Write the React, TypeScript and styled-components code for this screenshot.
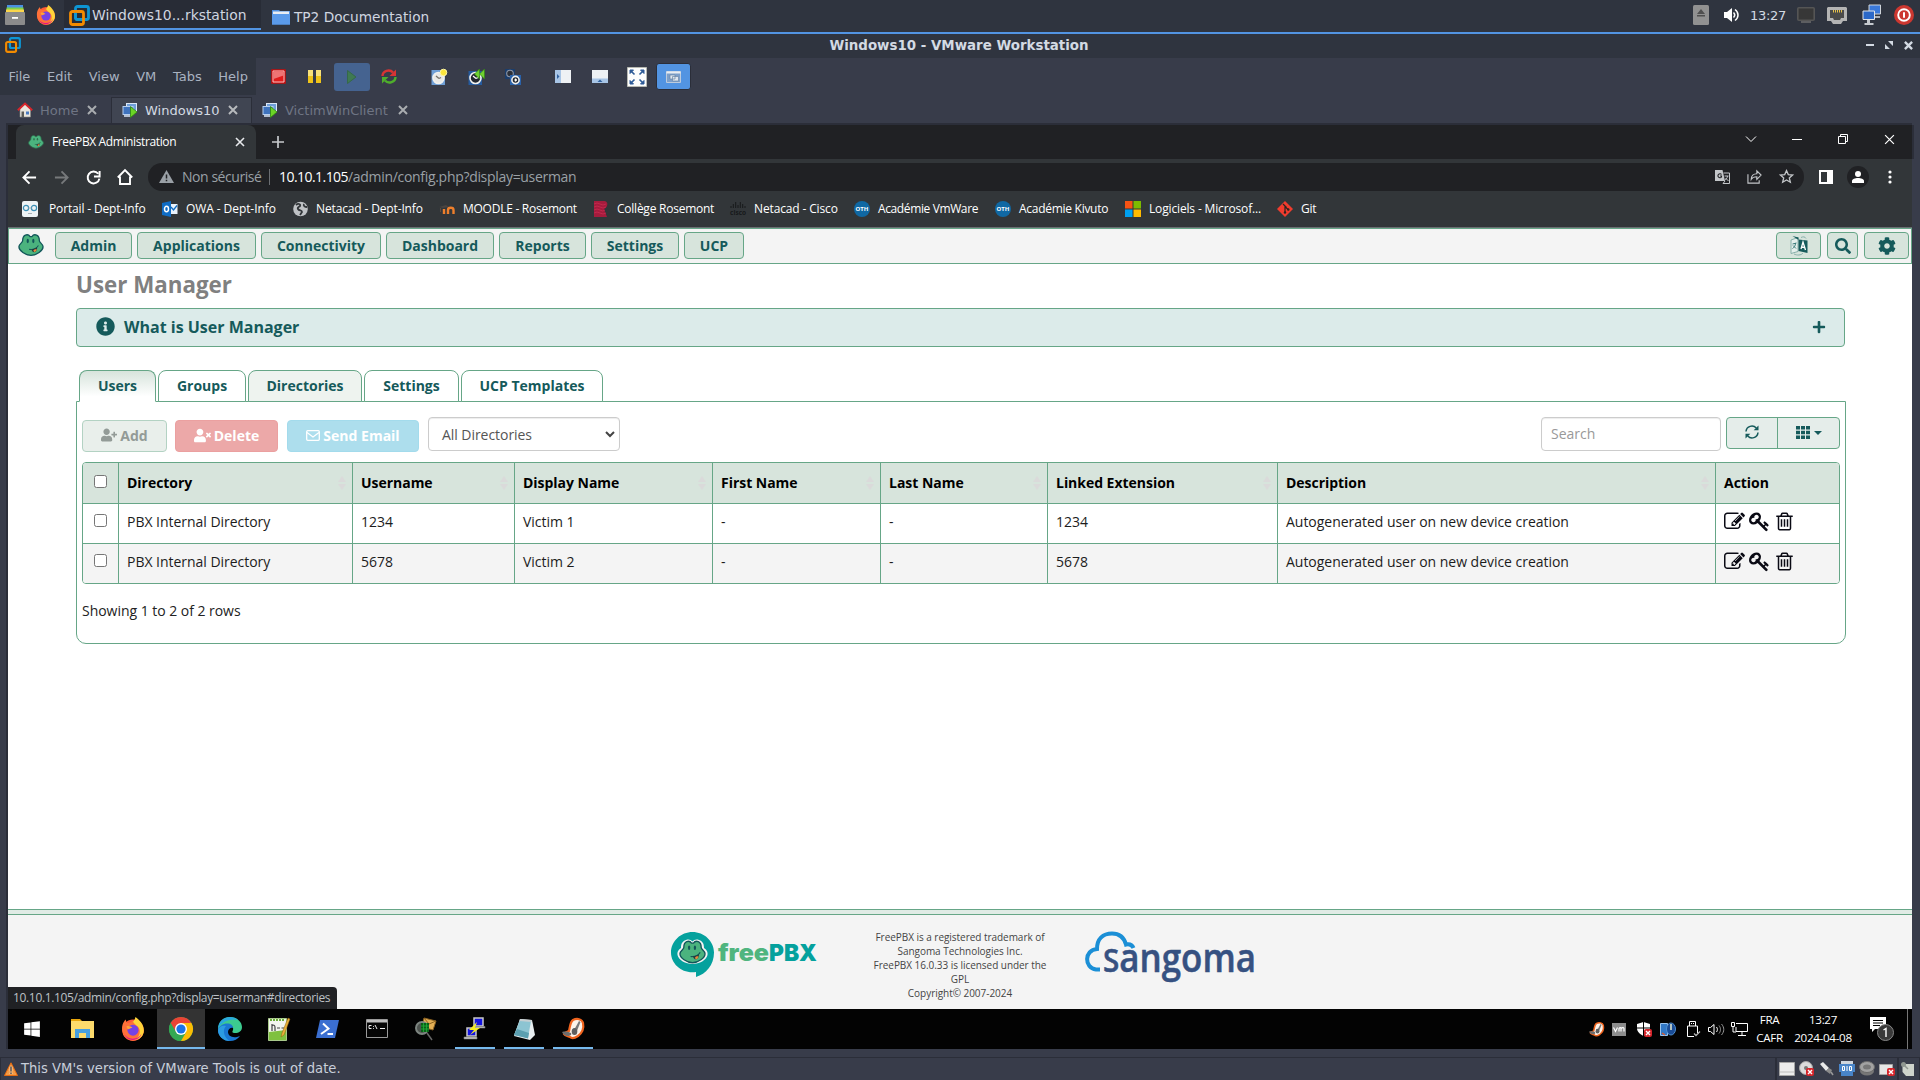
import React from 'react';
import styled, { createGlobalStyle, css } from 'styled-components';
import { FaInfoCircle, FaPlus, FaUserPlus, FaUserTimes, FaCog, FaSearch, FaWindows } from 'react-icons/fa';

const green = '#66a687';
const teal = '#155a5b';
const web = '"Open Sans", "Noto Sans", sans-serif';
const desk = '"DejaVu Sans", sans-serif';

const Global = createGlobalStyle`
  * { box-sizing: border-box; }
  html, body { margin: 0; padding: 0; background: #383c4a; }
  svg { display: block; flex: none; overflow: visible; }
`;

const Desktop = styled.div`
  width: 1920px;
  height: 1080px;
  display: flex;
  flex-direction: column;
  overflow: hidden;
  background: #383c4a;
  color: #d3dae3;
  font-family: ${desk};
  font-size: 13px;
  white-space: nowrap;
`;

/* A box that centres one drawing, with the gap that precedes it */
const Slot = styled.span<{ $w: number; $ml?: number }>`
  flex: none;
  display: flex;
  align-items: center;
  justify-content: center;
  width: ${p => p.$w}px;
  margin-left: ${p => p.$ml ?? 0}px;
`;
const Fill = styled.div`
  flex: 1;
`;

/* ---------- Desktop panel ---------- */
const Panel = styled.header`
  height: 34px;
  flex: none;
  display: flex;
  align-items: center;
  padding: 0 6px 2px 5px;
  background: #2f343f;
  border-bottom: 2px solid #5294e2;
`;
const TaskButton = styled.div<{ $active?: boolean }>`
  height: 30px;
  align-self: flex-start;
  display: flex;
  align-items: center;
  font-size: 13.7px;
  color: #d0d6e0;
  ${p =>
    p.$active
      ? css`
          width: 197px;
          margin-left: 8px;
          padding-left: 5px;
          gap: 2px;
          background: #282c36;
          border-bottom: 2px solid #5294e2;
          padding-top: 2px;
          font-size: 13.9px;
        `
      : css`
          margin-left: 11px;
          gap: 4px;
          padding-top: 3px;
        `}
`;
const PanelClock = styled.span`
  width: 38px;
  margin-left: 11px;
  margin-right: 1px;
  letter-spacing: -0.3px;
`;

const TitleBar = styled.div`
  height: 24px;
  flex: none;
  display: grid;
  grid-template-columns: 100px 1fr 100px;
  align-items: center;
  background: #2f343f;
  padding: 0 7px 2px 5px;
`;
const Title = styled.h1`
  margin: 0;
  text-align: center;
  font: bold 13.4px ${desk};
  color: #d3dae3;
`;
const WindowButtons = styled.div`
  display: flex;
  justify-content: flex-end;
  gap: 11px;
`;

const MenuRow = styled.div`
  height: 37px;
  flex: none;
  display: flex;
  align-items: center;
`;
const MenuBar = styled.nav`
  width: 256px;
  height: 37px;
  display: flex;
  align-items: center;
  gap: 16.6px;
  padding-left: 8.6px;
  background: #2f343f;
  color: #a9b2c1;
`;
const ToolButton = styled.span<{ $tone: 'dim' | 'on' }>`
  display: flex;
  align-items: center;
  justify-content: center;
  border-radius: 3px;
  ${p =>
    p.$tone === 'dim'
      ? css`
          width: 36px;
          height: 28px;
          margin-left: 12px;
          background: #456390;
        `
      : css`
          width: 35px;
          height: 27px;
          margin-left: 9px;
          background: #5294e2;
          border: 1px solid #2b2e39;
        `}
`;

const VmTabs = styled.div`
  height: 29px;
  flex: none;
  display: flex;
  align-items: flex-end;
  padding-left: 6px;
`;
const VmTab = styled.div<{ $active?: boolean; $w: number; $pl: number }>`
  width: ${p => p.$w}px;
  height: 27px;
  padding: 0 13px 1px ${p => p.$pl}px;
  display: flex;
  align-items: center;
  color: ${p => (p.$active ? '#d3dae3' : '#6f7584')};
  background: ${p => (p.$active ? '#404552' : 'transparent')};
  border: 1px solid ${p => (p.$active ? '#2b2e39' : 'transparent')};
  gap: 7px;
`;
const VmTabName = styled.span`
  flex: 1;
`;

/* ---------- Guest screen ---------- */
const Guest = styled.div`
  width: 1906px;
  height: 926px;
  flex: none;
  margin-left: 6px;
  margin-top: -1px;
  border-left: 2px solid #2b2e39;
  border-top: 2px solid #2b2e39;
  display: flex;
  flex-direction: column;
  font-family: ${web};
`;
const TabStrip = styled.div`
  height: 34px;
  flex: none;
  display: flex;
  align-items: center;
  padding-right: 17px;
  background: #202124;
  box-shadow: 2px 0 0 #2b2e39;
`;
const ChromeTab = styled.div`
  width: 240px;
  height: 34px;
  margin-left: 8px;
  padding: 0 11px 1px 12px;
  display: flex;
  align-items: center;
  gap: 8px;
  background: #323639;
  border-radius: 8px 8px 0 0;
  color: #fff;
  font-size: 12px;
  letter-spacing: -0.38px;
`;
const TabTitle = styled.span`
  flex: 1;
`;
const CaptionButtons = styled.div`
  display: flex;
  align-items: center;
  gap: 34px;
  padding-bottom: 6px;
`;
const Toolbar = styled.div`
  height: 36px;
  flex: none;
  display: flex;
  align-items: center;
  padding: 0 14px 0 13px;
  background: #323639;
`;
const Omnibox = styled.div`
  width: 1656px;
  height: 28px;
  margin-left: 15px;
  margin-right: 15px;
  padding: 0 10px 1px;
  display: flex;
  align-items: center;
  border-radius: 14px;
  background: #202124;
  color: #9aa0a6;
  font-size: 14px;
  letter-spacing: -0.31px;
`;
const Insecure = styled.span`
  width: 88px;
  margin-left: 8px;
  border-right: 1px solid #6b6e72;
  line-height: 16px;
  letter-spacing: -0.45px;
`;
const Host = styled.span`
  margin-left: 9px;
  color: #fff;
  letter-spacing: -0.55px;
`;
const Avatar = styled.span`
  width: 22px;
  height: 22px;
  margin-left: 14px;
  border-radius: 50%;
  display: flex;
  align-items: center;
  justify-content: center;
  background: #202124;
`;
const Bookmarks = styled.div`
  height: 33px;
  flex: none;
  display: flex;
  align-items: center;
  padding: 0 0 5px 14px;
  background: #323639;
  border-bottom: 1px solid #6a6f72;
  color: #fff;
  font-size: 12px;
`;
const Bookmark = styled.span<{ $w: number; $ls: number; $gap?: number }>`
  width: ${p => p.$w}px;
  display: flex;
  align-items: center;
  gap: ${p => p.$gap ?? 8}px;
  letter-spacing: ${p => p.$ls}px;
`;
const OthBadge = styled.span`
  width: 16px;
  height: 16px;
  border-radius: 50%;
  background: #1068a3;
  color: #fff;
  font: bold 6px/16px ${web};
  text-align: center;
  letter-spacing: 0;
`;

/* ---------- Web page ---------- */
const Page = styled.main`
  position: relative;
  height: 781px;
  flex: none;
  display: flex;
  flex-direction: column;
  background: #fff;
  color: #111;
  font-size: 14px;
`;
const NavBar = styled.nav`
  height: 36px;
  flex: none;
  display: flex;
  align-items: center;
  gap: 5px;
  padding: 0 2px 1px 9px;
  background: #f4f4f4;
  border: 1px solid ${green};
`;
const NavLogo = styled.span`
  width: 32px;
`;
const NavTools = styled.div`
  display: flex;
  gap: 6px;
`;
const NavButton = styled.button<{ $w: number }>`
  width: ${p => p.$w}px;
  height: 27px;
  padding: 0;
  display: flex;
  align-items: center;
  justify-content: center;
  border: 1px solid ${green};
  border-radius: 4px;
  background: #d7e4dc;
  color: ${teal};
  font: bold 14px ${web};
`;
const Content = styled.section`
  flex: 1;
  padding: 0 66px 0 68px;
`;
const PageTitle = styled.h2`
  margin: 5px 0 8px;
  height: 31px;
  font: bold 22.35px/31px ${web};
  color: #808080;
`;
const InfoBar = styled.div`
  height: 39px;
  margin-right: 1px;
  padding: 0 18px 2px 19px;
  display: flex;
  align-items: center;
  gap: 9px;
  border: 1px solid ${green};
  border-radius: 4px;
  background: #dcebea;
  color: ${teal};
  font: bold 16px ${web};
`;
const Tabs = styled.div`
  position: relative;
  z-index: 1;
  display: flex;
  gap: 2px;
  margin: 23px 0 -1px 3px;
`;
const Tab = styled.div<{ $w: number; $state?: 'active' | 'hover' }>`
  width: ${p => p.$w}px;
  height: 32px;
  line-height: 30px;
  text-align: center;
  font-weight: bold;
  color: ${teal};
  border: 1px solid ${green};
  border-radius: 8px 8px 0 0;
  background: ${p => (p.$state === 'hover' ? '#eef3ef' : '#fff')};
  ${p =>
    p.$state === 'active' &&
    css`
      border-bottom-color: #fff;
      background: linear-gradient(#d7e4dc, #fff 85%);
    `}
`;
const TabPane = styled.div`
  height: 243px;
  padding: 0 5px;
  border: 1px solid ${green};
  border-radius: 0 0 10px 10px;
`;
const Tools = styled.div`
  height: 60px;
  display: flex;
  align-items: flex-start;
  padding-top: 15px;
`;
const ActionButton = styled.button<{ $tone: 'plain' | 'danger' | 'info'; $w: number }>`
  width: ${p => p.$w}px;
  height: 32px;
  margin: 3px 8px 0 0;
  padding: 0 0 2px;
  display: flex;
  align-items: center;
  justify-content: center;
  gap: 3px;
  border-radius: 4px;
  font: bold 14px ${web};
  ${p => p.$tone === 'plain' && css`background: #e9efeb; border: 1px solid #b3d2c3; color: #939b97;`}
  ${p => p.$tone === 'danger' && css`background: #eca8a8; border: 1px solid #eba0a0; color: #fff;`}
  ${p => p.$tone === 'info' && css`background: #addeed; border: 1px solid #a3dbec; color: #fff; margin-left: 1px;`}
`;
const Select = styled.div`
  width: 192px;
  height: 34px;
  margin-left: 1px;
  padding: 0 4px 0 13px;
  display: flex;
  align-items: center;
  justify-content: space-between;
  border: 1px solid #ccc;
  border-radius: 4px;
  color: #555;
  letter-spacing: -0.05px;
  box-shadow: inset 0 1px 1px rgba(0, 0, 0, 0.075);
`;
const SearchBox = styled.div`
  width: 180px;
  height: 34px;
  padding: 0 9px;
  line-height: 32px;
  border: 1px solid #ccc;
  border-radius: 4px;
  color: #999;
  box-shadow: inset 0 1px 1px rgba(0, 0, 0, 0.075);
`;
const ButtonGroup = styled.div`
  width: 114px;
  height: 32px;
  margin-left: 5px;
  display: grid;
  grid-template-columns: 51px 1fr;
  border: 1px solid ${green};
  border-radius: 4px;
  background: #e5edea;
`;
const GroupButton = styled.span<{ $first?: boolean }>`
  display: flex;
  align-items: center;
  justify-content: center;
  gap: 4px;
  padding-bottom: 2px;
  border-right: ${p => (p.$first ? `1px solid ${green}` : '0')};
`;
const Table = styled.div`
  border: 1px solid ${green};
  border-radius: 4px;
  overflow: hidden;
  color: #111;
`;
const Row = styled.div<{ $kind: 'head' | 'odd' | 'even' }>`
  display: grid;
  grid-template-columns: 36px 234px 162px 198px 168px 167px 230px 438px 1fr;
  height: ${p => ({ head: 41, odd: 40, even: 39 })[p.$kind]}px;
  background: ${p => ({ head: '#d7e4dc', odd: '#fff', even: '#f4f4f4' })[p.$kind]};
  border-bottom: ${p => (p.$kind === 'even' ? '0' : `1px solid ${green}`)};
  font-weight: ${p => (p.$kind === 'head' ? 'bold' : 'normal')};
  color: ${p => (p.$kind === 'head' ? '#000' : '#1c1c1c')};
  letter-spacing: -0.03px;
`;
const Cell = styled.div`
  display: flex;
  align-items: center;
  justify-content: space-between;
  padding: 0 6px 5px 8px;
  border-right: 1px solid ${green};
`;
const HeadCell = styled(Cell)`
  padding-bottom: 1px;
  &:last-child {
    border-right: 0;
  }
`;
const ActionCell = styled(Cell)`
  justify-content: flex-start;
  gap: 4px;
  padding-bottom: 4px;
  border-right: 0;
  color: #0a0a14;
`;
const CheckCell = styled(Cell)<{ $head?: boolean }>`
  justify-content: center;
  padding: 0 0 ${p => (p.$head ? 3 : 6)}px 0;
`;
const CheckBox = styled.i`
  width: 13px;
  height: 13px;
  border: 1px solid #767676;
  border-radius: 2.5px;
  background: #fff;
`;
const Summary = styled.p`
  margin: 17px 0 0;
  line-height: 20px;
  color: #222;
  letter-spacing: -0.03px;
`;
const Footer = styled.footer`
  height: 100px;
  flex: none;
  display: flex;
  background: #f4f4f4;
  border-top: 1px solid ${green};
  padding-left: 663px;
  &::before {
    content: '';
    width: 1904px;
    height: 4px;
    margin-left: -663px;
    margin-right: -1241px;
    flex: none;
    background: #e0ebe5;
    border-bottom: 1px solid ${green};
  }
`;
const Legal = styled.p`
  width: 196px;
  margin: 20px 27px 0 45px;
  text-align: center;
  font-size: 10px;
  line-height: 14.1px;
  letter-spacing: -0.04px;
  color: #444;
`;
const FooterLogo = styled.div<{ $w: number }>`
  width: ${p => p.$w}px;
  margin-top: 21px;
`;
const LinkBubble = styled.div`
  position: absolute;
  left: 0;
  bottom: 0;
  width: 329px;
  height: 22px;
  padding-left: 5px;
  line-height: 22px;
  background: #202124;
  border-top-right-radius: 4px;
  color: #bdc1c6;
  font-size: 12px;
  letter-spacing: -0.34px;
`;

/* ---------- Windows taskbar ---------- */
const WinBar = styled.div`
  height: 40px;
  flex: none;
  display: flex;
  background: #030303;
  color: #fff;
  font-size: 12px;
`;
const WinTask = styled.div<{ $w: number; $open?: boolean; $hot?: boolean }>`
  width: ${p => p.$w}px;
  height: 40px;
  display: flex;
  align-items: center;
  justify-content: center;
  padding-top: 1px;
  background: ${p => (p.$hot ? '#333' : 'transparent')};
  border-bottom: 2px solid ${p => (p.$open ? '#76b9ed' : 'transparent')};
  margin-right: ${p => (p.$w === 40 ? 9 : 0)}px;
`;
const TrayText = styled.div<{ $w: number }>`
  width: ${p => p.$w}px;
  display: flex;
  flex-direction: column;
  align-items: center;
  padding-top: 2px;
  line-height: 17.5px;
  font-size: 11.6px;
  letter-spacing: -0.3px;
`;
const ShowDesktop = styled.div`
  width: 5px;
  border-left: 1px solid #777;
`;
const StatusBar = styled.div`
  flex: none;
  height: 24px;
  margin-top: 8px;
  display: flex;
  align-items: center;
  padding: 0 2px 1px 3px;
  border: 1px solid #2b2e39;
  border-bottom: 1px solid #2b2430;
  font-size: 13.17px;
  color: #c8cfda;
`;
const DeviceBox = styled.div<{ $w: number }>`
  width: ${p => p.$w}px;
  height: 22px;
  display: flex;
  align-items: center;
  justify-content: space-around;
  border-left: 2px solid #2b2e39;
`;

/* ---------- Drawings ---------- */
const Vmware = ({ s }: { s: number }) => (
  <svg width={s} height={s} viewBox="0 0 21 21" fill="none" strokeWidth="2.8">
    <rect x="6.5" y="1.5" width="13" height="13" rx="2" stroke="#0d95d3" />
    <rect x="1.5" y="6.5" width="13" height="13" rx="2" stroke="#f38b00" />
    <path d="M6.5 6v6.500a2 2 0 0 0 2 2H12" stroke="#0d95d3" />
    <path d="M4 6.500h5" stroke="#f38b00" />
  </svg>
);
const Firefox = ({ s }: { s: number }) => (
  <svg width={s} height={s} viewBox="0 0 20 20">
    <circle cx="10" cy="11" r="9" fill="#ff5a36" />
    <path d="M1.200 12C0 6 3 3 4 2c0 2 1 3 2 3 2 0 3-1 3.500-2C12 6 19 8 19 12a9 9 0 0 1-17.800 0z" fill="#ff7139" />
    <path d="M10 4c1-1 2-3 2-4 3 2 7 6 7 11 0 5-4 8-8 8 5-2 6-8 3-11-1-1-3-2-4-4z" fill="#ffd43a" />
    <circle cx="10" cy="11" r="4.600" fill="#7542e5" />
    <path d="M4.500 8c2-1 4 0 5 1-2 0-3 2-4 1z" fill="#ffa436" />
    <path d="M2 13c2 6 12 7 15 1-1 6-12 8-15-1z" fill="#e31587" />
  </svg>
);
const Frog = ({ w, line = '#12565a' }: { w: number; line?: string }) => (
  <svg width={w} height={w * 0.86} viewBox="0 0 28 24">
    <path d="M8 1.200c2-.8 4 0 5 1.500h2c1-1.500 3-2.300 5-1.500 2.500 1 3 3 3 6 0 2 4 3.500 4 6.500C27 18 20 23 14 23S1 18 1 13.700C1 10.700 5 9.200 5 7.200c0-3 .5-5 3-6z" fill="#4bb37e" stroke={line} strokeWidth="1.400" />
    <ellipse cx="10.500" cy="7.500" rx="1.200" ry="2.300" fill={line} />
    <ellipse cx="16.500" cy="7.500" rx="1.200" ry="2.300" fill={line} />
    <path d="M12 16.500c3.500.5 8-1 10-4.200" fill="none" stroke={line} strokeWidth="1.200" />
    <path d="M14.500 16.300c2.500 0 5-1 6-2 .5 2.500-1 5.200-3 5.200-1.500 0-2.500-1-3-3.200z" fill="#263a3c" />
    <path d="M16.500 18c1-1.500 2-1.800 3.700-1.600-.4 2-1.400 3-2.700 3z" fill="#e98b3a" />
  </svg>
);
const Cross = ({ s, c, w = 1.5 }: { s: number; c: string; w?: number }) => (
  <svg width={s} height={s} viewBox="0 0 10 10" stroke={c} strokeWidth={w} fill="none">
    <path d="M1 1l8 8M9 1L1 9" />
  </svg>
);
const VmGlyph = () => (
  <svg width="16" height="16" viewBox="0 0 16 16">
    <rect x="4.500" y="1.500" width="10" height="8" fill="#6f9fd8" stroke="#dce8f8" />
    <rect x="1" y="4.500" width="10" height="8" fill="#3f73bd" stroke="#b6cff0" />
    <path d="M2 14h7" stroke="#dce8f8" strokeWidth="1.500" />
    <path d="M8.500 4.500l6.500 5.500-6.500 5.500z" fill="#6bd425" stroke="#2f8a0c" strokeWidth=".8" />
  </svg>
);
const House = () => (
  <svg width="16" height="16" viewBox="0 0 16 16">
    <path d="M3 7v8h10.500V7L8 2z" fill="#e9e6dd" stroke="#8c8a84" strokeWidth=".6" />
    <path d="M.8 8.200L8 1.500l7.200 6.700" fill="none" stroke="#d7252b" strokeWidth="2" />
    <path d="M4.500 9.500h2.500V15H4.500z" fill="#5b5b56" />
    <path d="M9 9.500h3v3H9z" fill="#4b7cc0" />
  </svg>
);
const Snapshot = ({ kind }: { kind: 'new' | 'back' | 'manage' }) => (
  <svg width="18" height="18" viewBox="0 0 18 18">
    {kind === 'new' && <path d="M1.500 2H15v15H1.500z" fill="#6f9fd6" />}
    {kind === 'back' && <path d="M1.500 3H15v14H1.500z" fill="#255a9e" />}
    {kind === 'manage' && (
      <>
        <path d="M1 1h10v10H1z" fill="#1b3d6b" />
        <circle cx="6" cy="5.500" r="3.300" fill="#2b2f38" stroke="#8d97a8" strokeWidth="1.100" />
        <path d="M6 7h11v10H6z" fill="#2a62aa" />
      </>
    )}
    <circle cx={kind === 'manage' ? 11.500 : 8.500} cy={kind === 'manage' ? 12 : 10} r={kind === 'manage' ? 3.600 : 5.500} fill={kind === 'new' ? '#e9e9e6' : '#23272f'} stroke="#f1f1ee" strokeWidth="1.600" />
    <path d={kind === 'manage' ? 'M10.500 12h2.500M11.500 10.500v3' : 'M6 8l3 2.500M9 10.500l2-1'} stroke={kind === 'new' ? '#77736b' : '#fff'} strokeWidth="1.300" />
    {kind === 'new' && <circle cx="13.500" cy="4.500" r="3.300" fill="#fbe53c" stroke="#fff6a0" />}
    {kind === 'back' && <path d="M12.500 1v10L7.500 6zM17.500 1v10l-5-5z" fill="#6fd12f" stroke="#2d8411" strokeWidth=".6" />}
  </svg>
);
const StopI = () => (
  <svg width="15" height="15" viewBox="0 0 15 15">
    <rect x=".7" y=".7" width="13.600" height="13.600" fill="#d81414" stroke="#b31212" />
    <path d="M2 2h11v11H2z" fill="#e01b1b" stroke="#f6c3c3" />
    <path d="M2.500 2.500h10v4l-10 3.500z" fill="#ee7474" />
  </svg>
);
const PauseI = () => (
  <svg width="13" height="13" viewBox="0 0 13 13">
    <path d="M0 0h5v13H0zM8 0h5v13H8z" fill="#f0c419" />
    <path d="M0 0h5v6H0zM8 0h5v6H8z" fill="#f9e27a" />
  </svg>
);
const RestartI = () => (
  <svg width="16" height="15" viewBox="0 0 16 15" fill="none" strokeWidth="2.400">
    <path d="M1.500 7C1.500 2 8.500-.5 12 3.500" stroke="#d83434" />
    <path d="M15 .5v6.500H8.500z" fill="#d83434" />
    <path d="M14.500 8C14.500 13 7.500 15.500 4 11.500" stroke="#4fae2c" />
    <path d="M1 14.500V8h6.500z" fill="#4fae2c" />
  </svg>
);
const PaneI = ({ side }: { side: boolean }) => (
  <svg width="16" height="13" viewBox="0 0 16 13">
    <path d="M0 0h16v13H0z" fill="#eef1f4" />
    {side ? <path d="M0 0h6v13H0z" fill="#a8c5e6" /> : <path d="M0 8.500h16V13H0z" fill="#a8c5e6" />}
    {side ? <path d="M2 4l2.500 2.500L2 9z" fill="#30619f" /> : <path d="M5.500 12L8 9.500l2.500 2.500z" fill="#30619f" />}
  </svg>
);
const FullscreenI = () => (
  <svg width="20" height="20" viewBox="0 0 20 20">
    <path d="M.5.5h19v19H.5z" fill="#fdfdfd" stroke="#b9bab3" />
    <g fill="#2e5b97" stroke="#2e5b97" strokeWidth="1.600">
      <path d="M3 3h3.500L3 6.500zM17 3h-3.500L17 6.500zM3 17h3.500L3 13.500zM17 17h-3.500l3.500-3.500z" strokeWidth="1" />
      <path d="M4 4l3.500 3.500M16 4l-3.500 3.500M4 16l3.500-3.500M16 16l-3.500-3.500" />
    </g>
  </svg>
);
const UnityI = () => (
  <svg width="15" height="12" viewBox="0 0 15 12">
    <path d="M.5.5h14v11H.5z" fill="#7c9fca" stroke="#bccbdd" />
    <path d="M.5.500h14v2H.5z" fill="#e8edf3" />
    <path d="M4 4h5v4H4zM6.500 5.500h6v4.500h-6z" fill="#dfe6ee" stroke="#6b86a8" strokeWidth=".7" />
  </svg>
);
const Line = ({ d, s = 16, c = '#fff', w = 1.800, vb = 16 }: { d: string; s?: number; c?: string; w?: number; vb?: number }) => (
  <svg width={s} height={s} viewBox={`0 0 ${vb} ${vb}`} fill="none" stroke={c} strokeWidth={w}>
    <path d={d} />
  </svg>
);
const Glyph = ({ d, s = 21 }: { d: string; s?: number }) => (
  <svg width={s} height={s} viewBox="0 0 1792 1792" fill="currentColor">
    <path d={d} />
  </svg>
);
const editPath = 'M888 1184l116-116-152-152-116 116v56h96v96h56zm440-720q-16-16-33 1l-350 350q-17 17-1 33t33-1l350-350q17-17 1-33zm80 594v190q0 119-84.500 203.500t-203.500 84.500h-832q-119 0-203.500-84.500t-84.500-203.500v-832q0-119 84.500-203.500t203.500-84.500h832q63 0 117 25 15 7 18 23 3 17-9 29l-49 49q-14 14-32 8-23-6-45-6h-832q-66 0-113 47t-47 113v832q0 66 47 113t113 47h832q66 0 113-47t47-113v-126q0-13 9-22l64-64q15-15 35-7t20 29zm-96-738l288 288-672 672h-288v-288zm444 132l-92 92-288-288 92-92q28-28 68-28t68 28l152 152q28 28 28 68t-28 68z';
const keyPath = 'M832 512q0-80-56-136t-136-56-136 56-56 136q0 42 19 83-41-19-83-19-80 0-136 56t-56 136 56 136 136 56 136-56 56-136q0-42-19-83 41 19 83 19 80 0 136-56t56-136zm851 704q0 17-49 66t-66 49q-9 0-28.500-16t-36.500-33-38.500-40-24.500-26l-96 96 220 220q28 28 28 68 0 42-39 81t-81 39q-40 0-68-28l-671-671q-176 131-365 131-163 0-265.500-102.500t-102.500-265.500q0-160 95-313t248-248 313-95q163 0 265.500 102.500t102.500 265.500q0 189-131 365l355 355 96-96q-3-3-26-24.500t-40-38.500-33-36.500-16-28.500q0-17 49-66t66-49q13 0 23 10 6 6 46 44.500t82 79.500 86.500 86 73 78 28.500 41z';
const trashPath = 'M704 736v576q0 14-9 23t-23 9h-64q-14 0-23-9t-9-23v-576q0-14 9-23t23-9h64q14 0 23 9t9 23zm256 0v576q0 14-9 23t-23 9h-64q-14 0-23-9t-9-23v-576q0-14 9-23t23-9h64q14 0 23 9t9 23zm256 0v576q0 14-9 23t-23 9h-64q-14 0-23-9t-9-23v-576q0-14 9-23t23-9h64q14 0 23 9t9 23zm128 724v-948h-896v948q0 22 7 40.500t14.500 27 10.500 8.500h832q3 0 10.500-8.500t14.500-27 7-40.500zm-672-1076h448l-48-117q-7-9-17-11h-317q-10 2-17 11zm928 32v64q0 14-9 23t-23 9h-96v948q0 83-47 143.500t-113 60.500h-832q-66 0-113-58.500t-47-141.500v-952h-96q-14 0-23-9t-9-23v-64q0-14 9-23t23-9h309l70-167q15-37 54-63t79-26h320q40 0 79 26t54 63l70 167h309q14 0 23 9t9 23z';

const Sort = () => (
  <svg width="8" height="14" viewBox="0 0 8 14" fill="#dbd7da" opacity=".75">
    <path d="M0 6l4-6 4 6zM0 8l4 6 4-6z" />
  </svg>
);
const FreePbxLogo = () => (
  <svg width="146" height="46" viewBox="0 0 146 46">
    <path d="M21.500 1C33 1 43 10 43 21.500 43 34 35 43 25 46v-5C11 43 0 33 0 21.500 0 10 10 1 21.500 1z" fill="#04a19d" />
    <path d="M15 9c3-1 5 0 6.500 1.500C23 9 25 8 28 9c4 1.500 5 4 5 8 3 2 4 4 3.500 7-1 5-8 9-15 9s-14-4-15-9c-.5-3 .5-5 3.500-7 0-4 1-6.500 5-8z" fill="#f4f4f4" />
    <g transform="translate(8 9.500)">
      <Frog w={27} />
    </g>
    <text x="47" y="30" fontFamily="Inter, sans-serif" fontWeight="900" fontSize="23.500" fill="#4fb57f" textLength="51" lengthAdjust="spacingAndGlyphs">free</text>
    <text x="98" y="30" fontFamily="Inter, sans-serif" fontWeight="900" fontSize="23.500" fill="#04a19d" textLength="48" lengthAdjust="spacingAndGlyphs">PBX</text>
  </svg>
);
const SangomaLogo = () => (
  <svg width="172" height="52" viewBox="0 0 172 52">
    <path d="M15 38.500H11C-1 37-1 19 12 18 12 8 18 2.500 27 2.500c8 0 12 4 14 11 4-1 6 0 7.500 3.500" fill="none" stroke="#1b8fd6" strokeWidth="4" />
    <text x="18" y="40.500" fontFamily="Open Sans, sans-serif" fontWeight="600" fontSize="39" fill="#365181" stroke="#365181" strokeWidth=".5" textLength="153" lengthAdjust="spacingAndGlyphs">
      <tspan fontSize="33">S</tspan>angoma
    </text>
  </svg>
);
const Edge = () => (
  <svg width="24" height="24" viewBox="0 0 24 24">
    <path d="M12 0c7 0 12 5 12 10 0 4-3 6-7 6-3 0-3-1-2-3 1-3-2-5-5-5C5 8 1 11 0 14 0 5 5 0 12 0z" fill="#3ccb8f" />
    <path d="M0 12C0 4 6 0 12 0c3 0 6 1 8 3C12 1 3 5 0 12z" fill="#2aa9de" />
    <path d="M0 13c1-4 5-6.500 9-6.500 4 0 6 2 6 4.500-2-1-5 1-5 4 0 4 5 7 12 4-2 3-6 5-10 5C5 24 0 19 0 13z" fill="#1a78d3" />
    <path d="M8 9c-4 4-2 12 4 15C5 24 0 19 0 13c1-3 4-5 8-4z" fill="#2c9ce2" />
  </svg>
);
const Chrome = () => (
  <svg width="24" height="24" viewBox="0 0 24 24">
    <circle cx="12" cy="12" r="12" fill="#34a853" />
    <path d="M12 12L1.600 6a12 12 0 0 1 20.800 0z" fill="#ea4335" />
    <path d="M12 6h10.400A12 12 0 0 1 12 24l5.200-9z" fill="#fbbc04" />
    <path d="M1.600 6L7 15l5-3V6z" fill="#ea4335" />
    <path d="M1.600 6l5.200 9c1 2 3 3 5.200 3L12 24A12 12 0 0 1 1.600 6z" fill="#34a853" />
    <circle cx="12" cy="12" r="6" fill="#fff" />
    <circle cx="12" cy="12" r="4.600" fill="#1a73e8" />
  </svg>
);
const Explorer = () => (
  <svg width="23" height="20" viewBox="0 0 23 20">
    <path d="M0 0h9l2 2H0z" fill="#e8a60c" />
    <path d="M0 2h23v17H0z" fill="#fddb6c" />
    <path d="M4 10h15v9h-4v-5H8v5H4z" fill="#48a0e0" />
    <path d="M8 14h7v5H8z" fill="#fddb6c" />
  </svg>
);
const Notepadpp = () => (
  <svg width="22" height="24" viewBox="0 0 22 24">
    <path d="M.5 1.500h18v22H.5z" fill="#f3f6ee" stroke="#a9c98b" />
    <path d="M1 15l17-2v10H1z" fill="#7fc13f" />
    <path d="M4 7v7M4 8.500c2-1 3 0 3 2V14M9 11h3M13.500 11h3" stroke="#444" strokeWidth="1.200" fill="none" />
    <path d="M2 3h14" stroke="#6cae38" strokeDasharray="2 1" strokeWidth="2" />
    <path d="M20 1l2 1-6 16-3 2 1-4z" fill="#eab13a" stroke="#8b6110" strokeWidth=".5" />
  </svg>
);
const PowerShell = () => (
  <svg width="23" height="18" viewBox="0 0 23 18">
    <path d="M4 0h19l-4 18H0z" fill="#3b6fd1" />
    <path d="M7 3.500l5.500 5.200L5 14M11.500 14h5.500" fill="none" stroke="#fff" strokeWidth="2" />
  </svg>
);
const Cmd = () => (
  <svg width="22" height="19" viewBox="0 0 22 19">
    <path d="M.5.5h21v18H.5z" fill="#050505" stroke="#9a9a9a" />
    <path d="M1 1h20v2.500H1z" fill="#bdbdbd" />
    <path d="M5.500 6.500H3v3h2.500M7.500 7v.8M7.500 9v.8M9 6l2 4M14 9.500h5" stroke="#eee" fill="none" />
  </svg>
);
const Scout = () => (
  <svg width="22" height="24" viewBox="0 0 22 24">
    <path d="M9 1l12 3-3 9-11-3z" fill="#e5b055" stroke="#8d6320" />
    <path d="M9 1l5 6 7-3" fill="none" stroke="#8d6320" />
    <circle cx="7" cy="11" r="6" fill="#4d534f" stroke="#7d8580" strokeWidth="2" />
    <path d="M6 6h8v9H6z" fill="#0a5f18" />
    <path d="M8.500 6v9M11.500 6v9M6 9h8M6 12h8" stroke="#23b33a" strokeWidth=".8" />
    <path d="M12 16l5 7" stroke="#666" strokeWidth="1.500" />
  </svg>
);
const Putty = () => (
  <svg width="22" height="23" viewBox="0 0 22 23">
    <path d="M10 1h9v8h-9zM3 11h9v8H3z" fill="#1414e0" stroke="#c9c9c9" strokeWidth="1.500" />
    <path d="M8 11h13v-1.500h-8zM0 22h13v-2H0z" fill="#c9c9c9" stroke="#777" strokeWidth=".6" />
    <path d="M13 5L5 13l5 0-4 5 10-7h-5z" fill="#f4ec22" />
  </svg>
);
const Notepad = () => (
  <svg width="21" height="22" viewBox="0 0 21 22">
    <path d="M6 1l12 1 3 15-5 5-16-4z" fill="#e8eef0" />
    <path d="M6 2l11 1-3 17L0 17z" fill="#8cc4d2" />
    <path d="M6 1l12 1-.5 2L5.500 3z" fill="#c6cfd2" />
    <path d="M3 11l12 4-1 5.500L0 17z" fill="#5b9fb0" />
  </svg>
);
const Brush = ({ s }: { s: number }) => (
  <svg width={s} height={s} viewBox="0 0 22 22">
    <path d="M11 2c4-2 9-1 10 3 1 5-1 10-5 13-3 2-6 3-8 1-2-1-5-1-6-3 1-2 3-2 5-3 1-4 1-9 4-11z" fill="#fdf3ea" stroke="#f0641e" strokeWidth="2.200" />
    <path d="M17 3l1.500 1-4 10-3-1z" fill="#777" />
    <path d="M0 14c4-1 7 0 9 1 1 2-1 3-3 3-3 0-5-2-6-4z" fill="#6d6d6d" />
    <ellipse cx="12.500" cy="13.500" rx="2.800" ry="3.500" fill="#5f5f5f" />
  </svg>
);

/* ---------- Data ---------- */
const bookmarks: { name: string; w: number; ls: number; gap?: number; icon: React.ReactNode }[] = [
  { name: 'Portail - Dept-Info', w: 140, ls: -0.15, gap: 11, icon: (
    <svg width="16" height="16" viewBox="0 0 16 16"><rect width="16" height="16" rx="2" fill="#eef3f5" /><g fill="none" stroke="#3b8fb5" strokeWidth="1.200"><circle cx="4" cy="7" r="2.600" /><circle cx="12" cy="7" r="2.600" /></g><path d="M6.500 7h3M6 12.500h4" stroke="#a9b3b8" /></svg>) },
  { name: 'OWA - Dept-Info', w: 131, ls: -0.08, icon: (
    <svg width="16" height="16" viewBox="0 0 16 16"><path d="M8 3h7.500v10H8z" fill="#e9f2fb" /><path d="M9 6l2.500 3L15 4.500" stroke="#0f6cc4" fill="none" strokeWidth="1.300" /><path d="M0 2l9-2v16l-9-2z" fill="#0f6cc4" /><ellipse cx="4.500" cy="8" rx="2" ry="2.700" fill="none" stroke="#fff" strokeWidth="1.500" /></svg>) },
  { name: 'Netacad - Dept-Info', w: 146, ls: -0.14, icon: (
    <svg width="15" height="16" viewBox="0 0 15 16"><circle cx="7.500" cy="8" r="7.300" fill="#bfc2c5" /><path d="M3 4c2-2 5-1 4 1-1 1-3 1-2 3s4 1 4 3l-2 3M11 3c-1 2 1 3 3 3" fill="none" stroke="#323639" strokeWidth="1.800" /></svg>) },
  { name: 'MOODLE - Rosemont', w: 154, ls: -0.26, icon: (
    <svg width="16" height="16" viewBox="0 0 16 16"><path d="M0 6l7-2 3 2-6 1z" fill="#4a4441" /><path d="M1.500 7v4" stroke="#5a4b42" /><path d="M5 13V8M9 13V9c0-3 5.500-3 5.500 0v4" stroke="#ee7f2c" strokeWidth="2.400" fill="none" /></svg>) },
  { name: 'Collège Rosemont', w: 137, ls: -0.24, icon: (
    <svg width="16" height="16" viewBox="0 0 16 16"><path d="M1 0h9c4 0 5 2 4 5-1 2-2 2-3 3l3 8H1z" fill="#a51c3d" /><path d="M1 3q3-2 6 0t6 0M1 6q3-2 6 0t6 0M1 9q3-2 6 0t5 0M1 12q3-2 6 0t6 0" stroke="#c92b50" fill="none" strokeWidth=".8" /></svg>) },
  { name: 'Netacad - Cisco', w: 124, ls: -0.14, icon: (
    <svg width="16" height="16" viewBox="0 0 16 16"><path d="M1 5v2M3.300 3v4M5.700 1v6M8 4v3M10.300 1v6M12.700 3v4M15 5v2" stroke="#17191b" /><text x="0" y="14" fontSize="6.500" fontWeight="bold" fontFamily="Open Sans, sans-serif" fill="#17191b" textLength="16">cisco</text></svg>) },
  { name: 'Académie VmWare', w: 141, ls: -0.38, icon: <OthBadge>OTH</OthBadge> },
  { name: 'Académie Kivuto', w: 130, ls: -0.28, icon: <OthBadge>OTH</OthBadge> },
  { name: 'Logiciels - Microsof...', w: 152, ls: -0.15, icon: (
    <svg width="16" height="16" viewBox="0 0 16 16"><path d="M0 0h7.500v7.500H0z" fill="#f65314" /><path d="M8.500 0H16v7.500H8.500z" fill="#7cbb00" /><path d="M0 8.500h7.500V16H0z" fill="#00a1f1" /><path d="M8.500 8.500H16V16H8.500z" fill="#ffbb00" /></svg>) },
  { name: 'Git', w: 60, ls: -0.2, icon: (
    <svg width="16" height="16" viewBox="0 0 16 16"><path d="M8 0l8 8-8 8-8-8z" fill="#f03c2e" /><path d="M6 3l3.500 3.500M8 5v7M8.500 6l3 3" stroke="#2b2320" fill="none" strokeWidth="1.200" /><circle cx="8" cy="11.500" r="1.200" fill="#2b2320" /><circle cx="11.300" cy="8.500" r="1.200" fill="#2b2320" /></svg>) },
];
const nav: [string, number][] = [['Admin', 77], ['Applications', 119], ['Connectivity', 120], ['Dashboard', 108], ['Reports', 87], ['Settings', 88], ['UCP', 60]];
const tabs: [string, number, ('active' | 'hover')?][] = [['Users', 77, 'active'], ['Groups', 88], ['Directories', 114, 'hover'], ['Settings', 95], ['UCP Templates', 142]];
const columns = ['Directory', 'Username', 'Display Name', 'First Name', 'Last Name', 'Linked Extension', 'Description'];
const users = [
  ['PBX Internal Directory', '1234', 'Victim 1', '-', '-', '1234', 'Autogenerated user on new device creation'],
  ['PBX Internal Directory', '5678', 'Victim 2', '-', '-', '5678', 'Autogenerated user on new device creation'],
];

const RedX = ({ x, y }: { x: number; y: number }) => (
  <g transform={`translate(${x} ${y})`}>
    <rect width="8" height="8" rx="2" fill="#d6252b" />
    <path d="M2 2l4 4M6 2L2 6" stroke="#fff" strokeWidth="1.400" />
  </g>
);

export default function App() {
  return (
    <Desktop>
      <Global />
      <Panel>
        <svg width="20" height="20" viewBox="0 0 20 20">
          <path d="M2 0h16v3H2z" fill="#4a90e2" /><path d="M1.500 2.500h17v3h-17z" fill="#7fd14b" /><path d="M1 4.500h18V8H1z" fill="#fbd64b" />
          <rect y="7" width="20" height="13" rx="1" fill="#8b8b8b" /><path d="M7 12h6v1.800H7z" fill="#fff" />
        </svg>
        <Slot $w={20} $ml={11}><Firefox s={20} /></Slot>
        <TaskButton $active><Vmware s={21} />Windows10...rkstation</TaskButton>
        <TaskButton>
          <svg width="18" height="16" viewBox="0 0 18 16"><path d="M0 1h7l1 1h10v13.500H0z" fill="#4f8fe0" /><path d="M1 2.500h16V5H1z" fill="#e8ecf2" /><path d="M0 5h18v10.500H0z" fill="#5a9aea" /></svg>
          TP2 Documentation
        </TaskButton>
        <Fill />
        <Slot $w={16}><svg width="16" height="20" viewBox="0 0 16 20"><rect width="16" height="20" rx="1.500" fill="#919191" /><path d="M8 4l4 5H4zM4 10h8v1.500H4z" fill="#4f4f4f" /></svg></Slot>
        <Slot $w={16} $ml={14}>
          <svg width="15" height="14" viewBox="0 0 15 14"><path d="M0 4h3l5-4v14L3 10H0z" fill="#fff" /><path d="M9.500 4.500c1.500 1.500 1.500 3.500 0 5M11 1.500c4 3 4 8 0 11" stroke="#fff" strokeWidth="1.500" fill="none" /></svg>
        </Slot>
        <PanelClock>13:27</PanelClock>
        <Slot $w={18} $ml={8}><svg width="18" height="16" viewBox="0 0 18 16"><rect x=".8" y=".8" width="16.400" height="12.400" rx="1" fill="#373737" stroke="#555" strokeWidth="1.600" /><path d="M4 15h10" stroke="#6a6a6a" strokeWidth="1.600" /></svg></Slot>
        <Slot $w={20} $ml={12}><svg width="20" height="17" viewBox="0 0 20 17"><path d="M1 0h18l1 1v13h-4l-2 3H6l-2-3H0V1z" fill="#b4b4b4" /><path d="M3 3h14v8h-3l-1 2H7l-1-2H3z" fill="#4a4a4a" /><path d="M6.500 3v2.500M8.500 3v2.500M10.500 3v2.500M12.500 3v2.500M14.500 3v2.500" stroke="#e8c24a" /></svg></Slot>
        <Slot $w={20} $ml={15}><svg width="20" height="22" viewBox="0 0 20 22"><path d="M7 1h11.500v9H7z" fill="#3a78d8" stroke="#cfd4da" /><path d="M12 12h6v2h-6z" fill="#aeb2b8" /><path d="M1 7h11.500v8.500H1z" fill="#2b68c8" stroke="#dfe3e8" /><path d="M5 16h3v3H5zM2.500 19h9v2h-9z" fill="#c5c9ce" /></svg></Slot>
        <Slot $w={20} $ml={12}><svg width="20" height="20" viewBox="0 0 20 20"><circle cx="10" cy="10" r="10" fill="#cc3730" /><circle cx="10" cy="10" r="5.800" fill="none" stroke="#fff" strokeWidth="1.900" /><path d="M10 7.300v5.400" stroke="#fff" strokeWidth="2" /></svg></Slot>
      </Panel>

      <TitleBar>
        <Vmware s={16} />
        <Title>Windows10 - VMware Workstation</Title>
        <WindowButtons>
          <Line s={8} vb={8} d="M0 4h8" w={2} c="#d3dae3" />
          <svg width="8" height="8" viewBox="0 0 8 8" fill="#d3dae3"><path d="M3 0h5v5zM0 3v5h5z" /></svg>
          <Cross s={9} c="#d3dae3" w={2.600} />
        </WindowButtons>
      </TitleBar>

      <MenuRow>
        <MenuBar>
          <span>File</span><span>Edit</span><span>View</span><span>VM</span><span>Tabs</span><span>Help</span>
        </MenuBar>
        <Slot $w={16} $ml={14}><StopI /></Slot>
        <Slot $w={16} $ml={20}><PauseI /></Slot>
        <ToolButton $tone="dim"><svg width="10" height="14" viewBox="0 0 10 14"><path d="M.5.5L9 7 .5 13.500z" fill="#3f7a52" stroke="#35684a" /></svg></ToolButton>
        <Slot $w={16} $ml={11}><RestartI /></Slot>
        <Slot $w={18} $ml={33}><Snapshot kind="new" /></Slot>
        <Slot $w={18} $ml={19}><Snapshot kind="back" /></Slot>
        <Slot $w={18} $ml={19}><Snapshot kind="manage" /></Slot>
        <Slot $w={16} $ml={33}><PaneI side /></Slot>
        <Slot $w={16} $ml={21}><PaneI side={false} /></Slot>
        <Slot $w={20} $ml={19}><FullscreenI /></Slot>
        <ToolButton $tone="on"><UnityI /></ToolButton>
      </MenuRow>

      <VmTabs>
        <VmTab $w={105} $pl={10}><House /><VmTabName>Home</VmTabName><Cross s={10} c="#a9adb0" w={2} /></VmTab>
        <VmTab $active $w={141} $pl={10}><VmGlyph /><VmTabName>Windows10</VmTabName><Cross s={10} c="#b7babd" w={2} /></VmTab>
        <VmTab $w={170} $pl={9}><VmGlyph /><VmTabName>VictimWinClient</VmTabName><Cross s={10} c="#a9adb0" w={2} /></VmTab>
      </VmTabs>

      <Guest>
        <TabStrip>
          <ChromeTab><Frog w={16} line="#2f6b4c" /><TabTitle>FreePBX Administration</TabTitle><Cross s={10} c="#e8eaed" w={1.600} /></ChromeTab>
          <Slot $w={14} $ml={15}><Line s={12} vb={12} d="M6 0v12M0 6h12" c="#c6c9cc" w={1.700} /></Slot>
          <Fill />
          <CaptionButtons>
            <Slot $w={12}><Line s={10} vb={10} d="M0 2.500l5 5 5-5" w={1} /></Slot>
            <Slot $w={12}><Line s={10} vb={10} d="M0 5.500h10" w={1} /></Slot>
            <Slot $w={12}><Line s={10} vb={10} d="M.5 2.500h7v7h-7zM2.500 2.500v-2h7v7h-2" w={1} /></Slot>
            <Slot $w={12}><Cross s={11} c="#fff" w={1.100} /></Slot>
          </CaptionButtons>
        </TabStrip>
        <Toolbar>
          <Slot $w={16}><Line d="M15 8H2M8 1.500L1.500 8 8 14.500" s={15} w={2} /></Slot>
          <Slot $w={16} $ml={16}><Line d="M1 8h13M8 1.500L14.500 8 8 14.500" s={15} w={2} c="#76797b" /></Slot>
          <Slot $w={16} $ml={16}><Line d="M13 4a6.300 6.300 0 1 0 1.300 5.200M14.500 1v6H8.500" w={2.100} s={15} /></Slot>
          <Slot $w={16} $ml={16}><Line d="M3 7.500V15h10V7.500M.8 8.500L8 1l7.200 7.500" w={1.900} /></Slot>
          <Omnibox>
            <Slot $w={16}><svg width="15" height="13" viewBox="0 0 15 13"><path d="M7.500 0L15 13H0z" fill="#9aa0a6" /><path d="M7.500 4.500v4M7.500 9.700v1.500" stroke="#202124" strokeWidth="1.500" /></svg></Slot>
            <Insecure>Non sécurisé</Insecure>
            <Host>10.10.1.105</Host>/admin/config.php?display=userman
            <Fill />
            <Slot $w={16}><svg width="15" height="14" viewBox="0 0 15 14"><path d="M0 0h7.500L10 11H0z" fill="#c3c6c9" /><path d="M6.500 4.500A2 2 0 1 0 6.500 7V6H5" fill="none" stroke="#202124" strokeWidth="1.100" /><path d="M8.500 3h6v10.500H8l2-2.500" fill="none" stroke="#c3c6c9" /><path d="M9.500 6h4M12.500 6c0 2-2 4-3 4.500M10.500 8l3 3" stroke="#c3c6c9" fill="none" /></svg></Slot>
            <Slot $w={16} $ml={16}><Line d="M1 5.500V15h12v-3M4.500 11c0-4 2.500-6 6-6V2L15 6.500 10.500 11V8.300c-3 0-5 1-6 2.700z" w={1.200} c="#c3c6c9" s={15} /></Slot>
            <Slot $w={16} $ml={16}><Line d="M8 1.700l1.900 4.300 4.600.4-3.500 3.100 1.100 4.600L8 11.700l-4.100 2.400L5 9.500 1.500 6.400 6.100 6z" w={1.400} c="#c3c6c9" s={15} /></Slot>
          </Omnibox>
          <Slot $w={14}><svg width="14" height="14" viewBox="0 0 14 14"><path d="M1 1h12v12H1z" fill="none" stroke="#fff" strokeWidth="2" /><path d="M8 1h5v12H8z" fill="#fff" /></svg></Slot>
          <Avatar><svg width="12" height="12" viewBox="0 0 12 12" fill="#fff"><circle cx="6" cy="3" r="3" /><path d="M0 12v-2c0-4 12-4 12 0v2z" /></svg></Avatar>
          <Slot $w={14} $ml={14}><svg width="4" height="14" viewBox="0 0 4 14" fill="#fff"><circle cx="2" cy="2" r="1.600" /><circle cx="2" cy="7" r="1.600" /><circle cx="2" cy="12" r="1.600" /></svg></Slot>
        </Toolbar>
        <Bookmarks>
          {bookmarks.map((b, i) => (
            <Bookmark key={i} $w={b.w} $ls={b.ls} $gap={b.gap}>{b.icon}{b.name}</Bookmark>
          ))}
        </Bookmarks>

        <Page>
          <NavBar>
            <NavLogo><Frog w={26} /></NavLogo>
            {nav.map(([n, w]) => <NavButton key={n} $w={w}>{n}</NavButton>)}
            <Fill />
            <NavTools>
              <NavButton $w={45}>
                <svg width="18" height="19" viewBox="0 0 18 19"><path d="M1 4l7-2.500v14L1 17.500z" fill="#e4efec" stroke="#7fa9a5" strokeWidth=".9" /><path d="M2.500 8l4-1M5.500 7c0 3-1.500 4.500-3 5.500M3 9.500l3 3" stroke="#3c7c7b" fill="none" /><path d="M8.500 3.500l9 1v12.500L8.500 15z" fill={teal} /><path d="M2.500 0l6 1.500V4z" fill={teal} /><path d="M11 13l2-7 2.500 8M11.700 11l3 .7" stroke="#fff" strokeWidth="1.300" fill="none" /><path d="M11 1.500c2-1 4-1 5 1M4 18c3 1.500 7 1.500 9-1" stroke="#7fa9a5" fill="none" strokeWidth=".9" /></svg>
              </NavButton>
              <NavButton $w={31}><FaSearch size={16} /></NavButton>
              <NavButton $w={45}><FaCog size={18} /></NavButton>
            </NavTools>
          </NavBar>

          <Content>
            <PageTitle>User Manager</PageTitle>
            <InfoBar><FaInfoCircle size={19} />What is User Manager<Fill /><FaPlus size={14} /></InfoBar>
            <Tabs>{tabs.map(([n, w, s]) => <Tab key={n} $w={w} $state={s}>{n}</Tab>)}</Tabs>
            <TabPane>
              <Tools>
                <ActionButton $tone="plain" $w={85}><FaUserPlus size={16} />Add</ActionButton>
                <ActionButton $tone="danger" $w={103}><FaUserTimes size={17} />Delete</ActionButton>
                <ActionButton $tone="info" $w={132}>
                  <svg width="14" height="11" viewBox="0 0 14 11" fill="none" stroke="#fff" strokeWidth="1.300"><rect x=".7" y=".7" width="12.600" height="9.600" rx="1" /><path d="M1 2.500l6 4.500 6-4.500" /></svg>
                  Send Email
                </ActionButton>
                <Select>All Directories<Line s={10} vb={10} d="M1 3l4 4 4-4" w={2} c="#444" /></Select>
                <Fill />
                <SearchBox>Search</SearchBox>
                <ButtonGroup>
                  <GroupButton $first>
                    <svg width="14" height="14" viewBox="0 0 14 14" fill="none" stroke={teal} strokeWidth="1.500"><path d="M1 6.500C1.500 1 8-.5 11.300 3M13 7.500C12.500 13 6 14.500 2.700 11" /><path d="M13.500.5v4.800H8.700zM.5 13.500V8.700h4.800z" fill={teal} stroke="none" /></svg>
                  </GroupButton>
                  <GroupButton>
                    <svg width="14" height="13" viewBox="0 0 14 13" fill={teal}><path d="M0 0h4v3.500H0zM5 0h4v3.500H5zM10 0h4v3.500h-4zM0 4.700h4v3.500H0zM5 4.700h4v3.500H5zM10 4.700h4v3.500h-4zM0 9.500h4V13H0zM5 9.500h4V13H5zM10 9.500h4V13h-4z" /></svg>
                    <svg width="8" height="4" viewBox="0 0 8 4" fill={teal}><path d="M0 1h8L4 5z" /></svg>
                  </GroupButton>
                </ButtonGroup>
              </Tools>
              <Table>
                <Row $kind="head">
                  <CheckCell $head><CheckBox /></CheckCell>
                  {columns.map(c => <HeadCell key={c}>{c}<Sort /></HeadCell>)}
                  <HeadCell>Action</HeadCell>
                </Row>
                {users.map((u, i) => (
                  <Row key={i} $kind={i ? 'even' : 'odd'}>
                    <CheckCell><CheckBox /></CheckCell>
                    {u.map((v, j) => <Cell key={j}>{v}</Cell>)}
                    <ActionCell><Glyph d={editPath} /><Glyph d={keyPath} /><Glyph d={trashPath} /></ActionCell>
                  </Row>
                ))}
              </Table>
              <Summary>Showing 1 to 2 of 2 rows</Summary>
            </TabPane>
          </Content>

          <Footer>
            <FooterLogo $w={146}><FreePbxLogo /></FooterLogo>
            <Legal>
              FreePBX is a registered trademark of<br />Sangoma Technologies Inc.<br />FreePBX 16.0.33 is licensed under the<br />GPL<br />Copyright© 2007-2024
            </Legal>
            <FooterLogo $w={172}><SangomaLogo /></FooterLogo>
          </Footer>
          <LinkBubble>10.10.1.105/admin/config.php?display=userman#directories</LinkBubble>
        </Page>

        <WinBar>
          <WinTask $w={48}><FaWindows size={18} /></WinTask>
          <WinTask $w={52}><Explorer /></WinTask>
          <WinTask $w={49}><Firefox s={24} /></WinTask>
          <WinTask $w={48} $open $hot><Chrome /></WinTask>
          <WinTask $w={49}><Edge /></WinTask>
          <WinTask $w={49}><Notepadpp /></WinTask>
          <WinTask $w={49}><PowerShell /></WinTask>
          <WinTask $w={49}><Cmd /></WinTask>
          <WinTask $w={50}><Scout /></WinTask>
          <Slot $w={4} />
          <WinTask $w={40} $open><Putty /></WinTask>
          <WinTask $w={40} $open><Notepad /></WinTask>
          <WinTask $w={40} $open><Brush s={22} /></WinTask>
          <Fill />
          <Slot $w={16}><Brush s={15} /></Slot>
          <Slot $w={14} $ml={8}><svg width="14" height="13" viewBox="0 0 14 13"><path d="M0 0h14v13H0z" fill="#8d8d8d" /><path d="M1.500 4.500l2 4 2-4M7 8.500V5.500c1-1.500 2-1 2 0v3M9 5.500c1.500-1.500 3-1 3 0v3" stroke="#fff" strokeWidth="1.200" fill="none" /></svg></Slot>
          <Slot $w={16} $ml={10}><svg width="15" height="15" viewBox="0 0 15 15"><path d="M6.500 0L13 2v4c0 4-3 6-6.500 8C3 12 0 10 0 6V2z" fill="#fff" /><path d="M6.500 0v14M0 6h13" stroke="#030303" /><RedX x={7} y={7} /></svg></Slot>
          <Slot $w={16} $ml={8}><svg width="16" height="15" viewBox="0 0 16 15"><path d="M.5 1.500h7v12h-7z" fill="#3178c6" stroke="#9ac4ee" /><ellipse cx="11" cy="7" rx="4.500" ry="6" fill="#1a4c97" stroke="#4f8fd0" /><path d="M11 2v6" stroke="#e9ecd0" strokeWidth="1.500" /><path d="M2 11l3 2" stroke="#e05a2b" strokeWidth="1.500" /></svg></Slot>
          <Slot $w={14} $ml={10}><svg width="13" height="16" viewBox="0 0 13 16" fill="none" stroke="#fff"><path d="M2.500 5V.5h6V5M.5 5h10v7M.5 5v10.500H7M4.500 2v1M6.500 2v1" /><path d="M7 12.500l2 2 4-4" strokeWidth="1.300" stroke="#b5b5b5" /></svg></Slot>
          <Slot $w={17} $ml={7}><svg width="16" height="13" viewBox="0 0 16 13" fill="none" stroke="#fff"><path d="M.5 4.500h2L6 1.500v10l-3.500-3h-2z" /><path d="M8.500 4c1.200 1.500 1.200 3.500 0 5" /><path d="M11 2.500c2 2.500 2 5.500 0 8M13.500 1c3 3.500 3 7.500 0 11" stroke="#999" /></svg></Slot>
          <Slot $w={17} $ml={7}><svg width="17" height="14" viewBox="0 0 17 14" fill="none" stroke="#fff"><path d="M5 1.500h11.500v8H5V5M7 13.500h8M11 9.500v4M.5.5h3v4h-3zM2 5v5h3" /></svg></Slot>
          <Slot $w={7} />
          <TrayText $w={29}><span>FRA</span><span>CAFR</span></TrayText>
          <Slot $w={9} />
          <TrayText $w={60}><span>13:27</span><span>2024-04-08</span></TrayText>
          <Slot $w={24} $ml={17}>
            <svg width="24" height="24" viewBox="0 0 24 24"><path d="M0 0h16v12H5l-3 3v-3H0z" fill="#fff" /><path d="M3 3.500h10M3 6h10M3 8.500h7" stroke="#030303" /><circle cx="15.500" cy="15.500" r="8" fill="#3a3a3a" stroke="#888" /><path d="M13.500 13l2.500-1.500V20" stroke="#fff" strokeWidth="1.400" fill="none" /></svg>
          </Slot>
          <Slot $w={13} />
          <ShowDesktop />
        </WinBar>
      </Guest>

      <StatusBar>
        <Slot $w={13}><svg width="14" height="14" viewBox="0 0 14 14"><path d="M7 .8L13.500 13.500H.5z" fill="#f39a45" stroke="#e56a10" strokeLinejoin="round" /><path d="M7 4.500v5M7 10.500v1.600" stroke="#fff3e0" strokeWidth="2.600" /><path d="M7 4.500v5M7 10.500v1.600" stroke="#3b2a20" strokeWidth="1.300" /></svg></Slot>
        <Slot $w={4} />
        This VM's version of VMware Tools is out of date.
        <Fill />
        <DeviceBox $w={122}>
          <svg width="16" height="14" viewBox="0 0 16 14"><path d="M.5.5h15v13H.5z" fill="#ececec" stroke="#a5a5a5" /><path d="M1 10h14" stroke="#bcbcbc" /></svg>
          <svg width="16" height="15" viewBox="0 0 16 15"><circle cx="7" cy="7" r="6.500" fill="#dcdcdc" stroke="#a5a5a5" /><circle cx="7" cy="7" r="2" fill="#777" /><RedX x={7} y={7} /></svg>
          <svg width="15" height="14" viewBox="0 0 15 14"><path d="M1 2l3-2 6 6-3 3z" fill="#e9e9e9" /><path d="M7 9l3-3 3 2-2 4z" fill="#8b8b8b" /><path d="M12 10l2 3" stroke="#999" strokeWidth="1.500" /></svg>
          <svg width="16" height="15" viewBox="0 0 16 15"><path d="M2 0h12v4H2z" fill="#cfd6dd" /><path d="M0 3h16v8h-2v4H2v-4H0z" fill="#4884c8" /><path d="M3.500 5.500h2v4h-2zM8 5v5M10.500 5.500h2v4h-2z" stroke="#fff" fill="none" /></svg>
          <svg width="16" height="15" viewBox="0 0 16 15"><ellipse cx="8" cy="10" rx="7" ry="4.500" fill="#777" /><ellipse cx="8" cy="6" rx="7.500" ry="5.500" fill="#a2a2a2" stroke="#6b6b6b" /><ellipse cx="8" cy="6" rx="4" ry="2.500" fill="#777" /></svg>
          <svg width="16" height="14" viewBox="0 0 16 14"><path d="M.5 2.500h13v10H.5z" fill="#e6e6e6" stroke="#a5a5a5" /><RedX x={8} y={6} /></svg>
        </DeviceBox>
        <DeviceBox $w={20}><svg width="14" height="14" viewBox="0 0 14 14"><path d="M1.500 2H13v12H5l-3.500-4z" fill="#ced3cb" /><circle cx="2.500" cy="2.500" r="2.500" fill="#8f9690" /><path d="M4 4l3 3" stroke="#8f9690" strokeWidth="1.500" /></svg></DeviceBox>
      </StatusBar>
    </Desktop>
  );
}
